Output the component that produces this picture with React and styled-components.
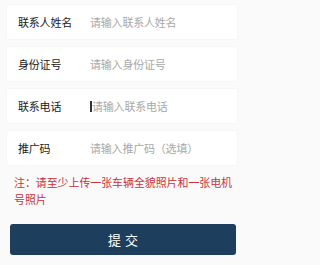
import React from "react";
import styled, { createGlobalStyle } from "styled-components";

const Global = createGlobalStyle`
  html, body { margin: 0; padding: 0; background: #fafafa; }
  body { font-family: "Noto Sans CJK SC", "Noto Sans", sans-serif; }
`;

const Page = styled.div`
  width: 245px;
  height: 265px;
  box-sizing: border-box;
  padding: 5px 8px 0 7px;
  display: flex;
  flex-direction: column;
  background: #fafafa;
  overflow: hidden;
`;

const Fields = styled.div`
  display: flex;
  flex-direction: column;
  gap: 8px;
`;

const Card = styled.div`
  height: 34px;
  background: #fff;
  border-radius: 2px;
  box-shadow: 0 0 2px rgba(0, 0, 0, 0.07);
  display: flex;
  align-items: center;
  padding-left: 11px;
`;

const Label = styled.span`
  width: 72px;
  flex: none;
  font-size: 11px;
  color: #1a1a1a;
  font-weight: 400;
  letter-spacing: -0.2px;
`;

const Placeholder = styled.span`
  font-size: 11px;
  color: #a8a8a8;
  display: flex;
  align-items: center;
  letter-spacing: -0.2px;
`;

const Caret = styled.span`
  width: 1.5px;
  height: 11px;
  background: #333;
  margin-right: 0.5px;
`;

const Note = styled.p`
  margin: 9px 0 0 7px;
  font-size: 11px;
  line-height: 16.5px;
  color: #c9333b;
  letter-spacing: -0.1px;
`;

const Submit = styled.button`
  margin: 17px 1px 0 3px;
  height: 31px;
  border: none;
  border-radius: 3px;
  background: #1e3e5e;
  color: #fff;
  font-family: inherit;
  font-size: 13px;
  letter-spacing: 4px;
  text-indent: 4px;
`;

const fields = [
  { label: "联系人姓名", ph: "请输入联系人姓名" },
  { label: "身份证号", ph: "请输入身份证号" },
  { label: "联系电话", ph: "请输入联系电话", caret: true },
  { label: "推广码", ph: "请输入推广码（选填）" },
];

export default function App() {
  return (
    <>
      <Global />
      <Page>
        <Fields>
          {fields.map((f) => (
            <Card key={f.label}>
              <Label>{f.label}</Label>
              <Placeholder>
                {f.caret && <Caret />}
                {f.ph}
              </Placeholder>
            </Card>
          ))}
        </Fields>
        <Note>注：请至少上传一张车辆全貌照片和一张电机号照片</Note>
        <Submit>提交</Submit>
      </Page>
    </>
  );
}
